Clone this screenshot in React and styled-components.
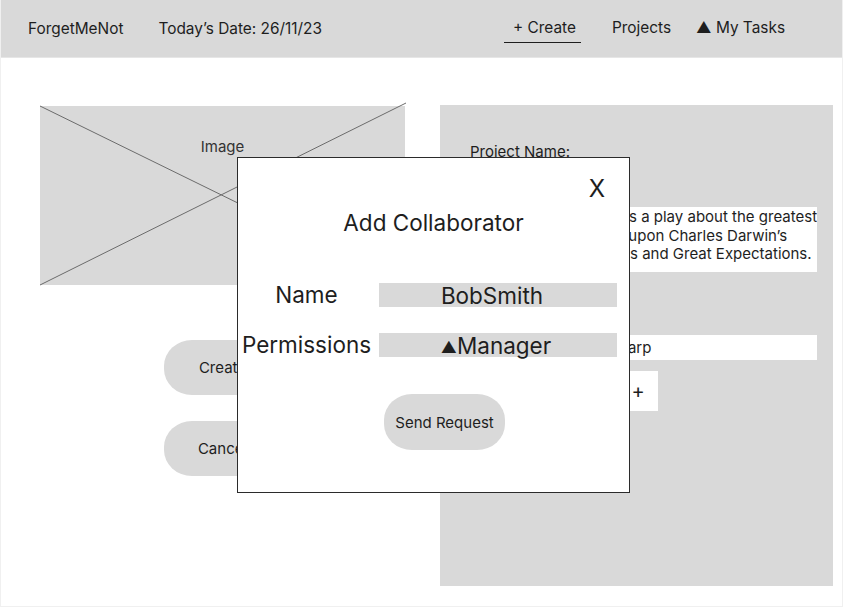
import React from 'react';
import styled, { createGlobalStyle } from 'styled-components';

const GlobalStyle = createGlobalStyle`
  * { box-sizing: border-box; }
  body {
    margin: 0;
    background: #ffffff;
    font-family: Inter, "Liberation Sans", sans-serif;
    color: #1e1e1e;
  }
`;

const Frame = styled.div`
  position: relative;
  width: 843px;
  height: 607px;
  border: 1px solid #f0f0f0;
  border-top: none;
  background: #ffffff;
  overflow: hidden;
`;

const Header = styled.header`
  height: 58px;
  background: #d9d9d9;
  border-bottom: 1px solid #e6e6e6;
  display: flex;
  align-items: center;
  padding: 0 57px 1px 27px;
  font-size: 15.4px;
`;

const Brand = styled.div`
  margin-right: 35px;
`;

const DateText = styled.div`
  flex: 1;
`;

const Nav = styled.nav`
  display: flex;
  align-items: center;
  gap: 25px;
`;

const NavItem = styled.div`
  line-height: 18px;
  padding: ${({ $active }) => ($active ? '5px 5px 5px 9px' : '5px 0')};
  margin-right: ${({ $active }) => ($active ? '6px' : '0')};
  border-bottom: 1px solid ${({ $active }) => ($active ? '#1e1e1e' : 'transparent')};
`;

const Main = styled.main`
  display: grid;
  grid-template-columns: 365px 393px;
  gap: 35px;
  padding: 47px 9px 0 39px;
`;

const LeftColumn = styled.div`
  display: flex;
  flex-direction: column;
  align-items: center;
  padding-top: 1px;
`;

const ImageBox = styled.div`
  position: relative;
  width: 365px;
  height: 179px;
  background: #d9d9d9;
  display: flex;
  justify-content: center;
  padding-top: 32px;
  font-size: 15px;
  color: #333;
`;

const Cross = styled.svg`
  position: absolute;
  left: 0;
  top: 0;
  overflow: visible;
`;

const Label = styled.span`
  position: relative;
  line-height: 18px;
`;

const PillButton = styled.div`
  width: 117px;
  height: 55px;
  border-radius: 28px / 26px;
  background: #d9d9d9;
  display: flex;
  align-items: center;
  justify-content: center;
  font-size: 15px;
  margin-top: ${({ $top }) => $top}px;
`;

const Panel = styled.section`
  height: 481px;
  background: #d9d9d9;
  padding: 38px 16px 0 30px;
  display: flex;
  flex-direction: column;
  font-size: 15px;
`;

const FieldLabel = styled.div`
  line-height: 18px;
  margin-top: ${({ $top }) => $top || 0}px;
`;

const WhiteInput = styled.div`
  height: 25px;
  width: ${({ $width }) => ($width ? `${$width}px` : 'auto')};
  background: #ffffff;
  line-height: 25px;
  padding: 0 2px;
  white-space: pre;
  margin-top: ${({ $top }) => $top || 0}px;
`;

const TextArea = styled.div`
  height: 65px;
  background: #ffffff;
  line-height: 18.5px;
  padding: 1px 2px 0;
  white-space: pre;
  overflow: hidden;
  margin-top: ${({ $top }) => $top || 0}px;
`;

const AddBox = styled.div`
  width: 40px;
  height: 40px;
  background: #ffffff;
  display: flex;
  align-items: center;
  justify-content: center;
  font-size: 20px;
  margin-top: 11px;
  margin-left: 148px;
`;

const Modal = styled.div`
  position: absolute;
  left: 236px;
  top: 157px;
  width: 393px;
  height: 336px;
  background: #ffffff;
  border: 1px solid #2b2b2b;
  display: flex;
  flex-direction: column;
  padding-top: 18px;
  font-size: 22.5px;
`;

const CloseRow = styled.div`
  display: flex;
  justify-content: flex-end;
  padding-right: 24px;
  line-height: 26px;
  font-size: 24px;
`;

const Title = styled.div`
  text-align: center;
  line-height: 26px;
  margin-top: 8px;
`;

const Form = styled.div`
  display: grid;
  grid-template-columns: 135px 238px;
  column-gap: 5px;
  row-gap: 26px;
  margin: 47px 0 0 1px;
`;

const FormLabel = styled.div`
  height: 24px;
  line-height: 24px;
  text-align: center;
  white-space: nowrap;
`;

const FormField = styled.div`
  height: 24px;
  line-height: 26px;
  background: #d9d9d9;
  text-align: center;
  padding-right: ${({ $pad }) => $pad ?? 12}px;
`;

const Caret = styled.span`
  font-size: 16px;
  vertical-align: 1px;
`;

const SendButton = styled(PillButton)`
  width: 121px;
  height: 56px;
  align-self: flex-start;
  margin-left: 146px;
`;

export default function App() {
  return (
    <>
      <GlobalStyle />
      <Frame>
        <Header>
          <Brand>ForgetMeNot</Brand>
          <DateText>Today’s Date: 26/11/23</DateText>
          <Nav>
            <NavItem $active>+ Create</NavItem>
            <NavItem>Projects</NavItem>
            <NavItem>▲ My Tasks</NavItem>
          </Nav>
        </Header>
        <Main>
          <LeftColumn>
            <ImageBox>
              <Cross width="365" height="179" viewBox="0 0 365 179">
                <line x1="0" y1="0" x2="365" y2="179" stroke="#6b6b6b" strokeWidth="1" />
                <line x1="0" y1="179" x2="366" y2="-3" stroke="#6b6b6b" strokeWidth="1" />
              </Cross>
              <Label>Image</Label>
            </ImageBox>
            <PillButton $top={55}>Create</PillButton>
            <PillButton $top={26}>Cancel</PillButton>
          </LeftColumn>
          <Panel>
            <FieldLabel>Project Name:</FieldLabel>
            <WhiteInput $top={4} $width={140}>Origin</WhiteInput>
            <TextArea $top={17}>{'Origin of Expectation is a play about the greatest\nmystery of all,  based upon Charles Darwin’s\nIn the Origin of Species and Great Expectations.'}</TextArea>
            <FieldLabel $top={22}>Collaborators:</FieldLabel>
            <WhiteInput $top={23}>Bob Smith, Joanna Sharp</WhiteInput>
            <AddBox>+</AddBox>
          </Panel>
        </Main>
        <Modal>
          <CloseRow>X</CloseRow>
          <Title>Add Collaborator</Title>
          <Form>
            <FormLabel>Name</FormLabel>
            <FormField>BobSmith</FormField>
            <FormLabel>Permissions</FormLabel>
            <FormField $pad={4}><Caret>▲</Caret>Manager</FormField>
          </Form>
          <SendButton $top={37}>Send Request</SendButton>
        </Modal>
      </Frame>
    </>
  );
}
